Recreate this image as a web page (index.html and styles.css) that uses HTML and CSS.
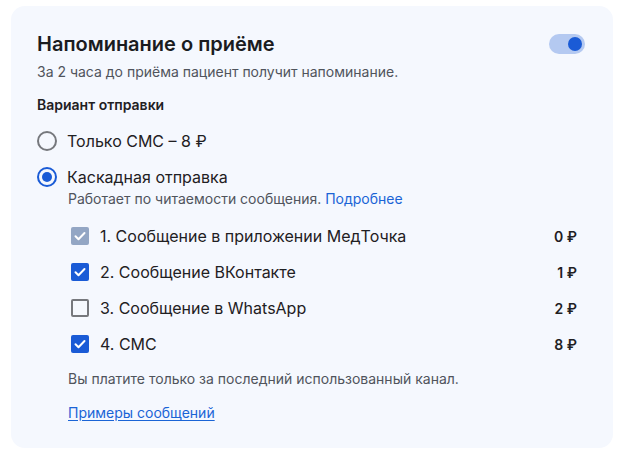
FILE: index.html
```html
<!DOCTYPE html>
<html lang="ru">
<head>
<meta charset="utf-8">
<link rel="stylesheet" href="styles.css">
</head>
<body>
<section class="card">
  <div class="head">
    <h1 class="title">Напоминание о приёме</h1>
    <span class="toggle"><span class="knob"></span></span>
  </div>
  <p class="sub">За 2 часа до приёма пациент получит напоминание.</p>
  <h2 class="label">Вариант отправки</h2>

  <div class="radio-row">
    <span class="radio-box"><span class="radio"></span></span>
    <span class="radio-text">Только СМС – 8 ₽</span>
  </div>
  <div class="radio-row second">
    <span class="radio-box"><span class="radio on"></span></span>
    <span class="radio-text">Каскадная отправка</span>
  </div>
  <div class="indent">
    <p class="desc">Работает по читаемости сообщения. <a class="link" href="#">Подробнее</a></p>

    <ul class="channels">
      <li class="ch">
        <span class="cb-box"><span class="cb disabled"><svg viewBox="0 0 18 18"><path d="M4.5 9.2l3 3 6-6.2"/></svg></span></span>
        <span class="ch-name">1. Сообщение в приложении МедТочка</span>
        <span class="price">0 ₽</span>
      </li>
      <li class="ch">
        <span class="cb-box"><span class="cb on"><svg viewBox="0 0 18 18"><path d="M4.5 9.2l3 3 6-6.2"/></svg></span></span>
        <span class="ch-name">2. Сообщение ВКонтакте</span>
        <span class="price">1 ₽</span>
      </li>
      <li class="ch">
        <span class="cb-box"><span class="cb off"></span></span>
        <span class="ch-name">3. Сообщение в WhatsApp</span>
        <span class="price">2 ₽</span>
      </li>
      <li class="ch">
        <span class="cb-box"><span class="cb on"><svg viewBox="0 0 18 18"><path d="M4.5 9.2l3 3 6-6.2"/></svg></span></span>
        <span class="ch-name">4. СМС</span>
        <span class="price">8 ₽</span>
      </li>
    </ul>

    <p class="note">Вы платите только за последний использованный канал.</p>
    <a class="examples" href="#">Примеры сообщений</a>
  </div>
</section>
</body>
</html>
```

FILE: styles.css
```css
* { box-sizing: border-box; }
html, body { margin: 0; padding: 0; background: #ffffff; }
body { font-family: Inter, "Noto Sans", sans-serif; color: #1f2023; }

.card {
  margin: 6px 0 0 11px;
  width: 602px;
  height: 442px;
  padding: 24px 28px 0 26px;
  background: #f5f8fe;
  border-radius: 14px;
}

.head { display: flex; justify-content: space-between; align-items: center; }
.title { margin: 0; font-size: 20px; line-height: 28px; font-weight: 600; color: #1b1c1f; }

.toggle {
  position: relative;
  display: block;
  width: 36px;
  height: 20px;
  border-radius: 10px;
  background: #b4c9f1;
}
.knob {
  position: absolute;
  right: 3px;
  top: 3px;
  width: 14px;
  height: 14px;
  border-radius: 50%;
  background: #1a5bd6;
}

.sub { margin: 4px 0 0; font-size: 14px; line-height: 20px; color: #50545c; }
.label { margin: 13px 0 0; font-size: 14px; line-height: 20px; font-weight: 600; color: #1f2023; }

.radio-row { display: flex; align-items: center; height: 24px; margin-top: 14px; gap: 8px; margin-left: -2px; }
.radio-row.second { margin-top: 12px; }
.radio-box { width: 24px; height: 24px; display: flex; align-items: center; justify-content: center; }
.radio {
  width: 20px; height: 20px; border-radius: 50%;
  border: 2px solid #76787d;
  display: flex; align-items: center; justify-content: center;
}
.radio.on { border-color: #1a5bd6; }
.radio.on::after { content: ""; width: 10px; height: 10px; border-radius: 50%; background: #1a5bd6; }
.radio-text { font-size: 16px; line-height: 24px; color: #1f2023; }

.indent { padding-left: 31px; }
.desc { margin: 0; font-size: 14px; line-height: 20px; color: #50545c; }
.link { color: #1a64d6; text-decoration: none; }

.channels { list-style: none; margin: 15px 8px 0 0; padding: 0; display: flex; flex-direction: column; gap: 12px; }
.ch { display: flex; align-items: center; height: 24px; }
.cb-box { width: 24px; height: 24px; display: flex; align-items: center; justify-content: center; margin-right: 8px; }
.cb { width: 18px; height: 18px; border-radius: 2px; display: flex; align-items: center; justify-content: center; }
.cb svg { width: 18px; height: 18px; fill: none; stroke: #ffffff; stroke-width: 2; stroke-linecap: round; stroke-linejoin: round; }
.cb.on { background: #1a5bd6; }
.cb.disabled { background: #93a6c4; }
.cb.off { border: 2px solid #76787d; }
.ch-name { flex: 1; font-size: 16px; line-height: 24px; color: #1f2023; }
.price { font-size: 14px; font-weight: 600; color: #1f2023; }

.note { margin: 13px 0 0; font-size: 14px; line-height: 20px; color: #50545c; }
.examples { display: inline-block; margin-top: 14px; font-size: 14px; line-height: 20px; color: #1a64d6; text-decoration: underline; text-underline-offset: 2px; }
```
